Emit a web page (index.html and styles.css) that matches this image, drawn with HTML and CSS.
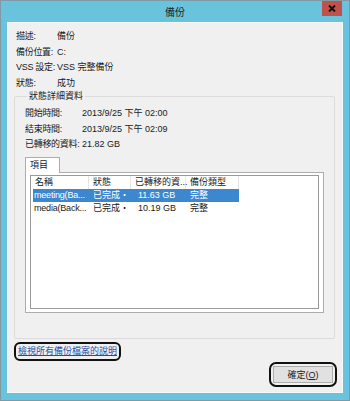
FILE: index.html
```html
<!DOCTYPE html>
<html lang="zh-Hant">
<head>
  <meta charset="UTF-8" />
  <title>備份</title>
  <link rel="stylesheet" href="styles.css">
</head>
<body>
  <div class="window">
    <div class="titlebar">
      <span></span>
      <span class="title">備份</span>
      <button class="close">
        <svg width="8" height="7" viewBox="0 0 8 7"><path d="M1 0.5 L7 6.5 M7 0.5 L1 6.5" stroke="#111" stroke-width="2"/></svg>
      </button>
    </div>
    <div class="content">
      <div class="info">
        <div class="row"><span class="label">描述:</span><span>備份</span></div>
        <div class="row"><span class="label">備份位置:</span><span>C:</span></div>
        <div class="row"><span class="label">VSS 設定:</span><span>VSS 完整備份</span></div>
        <div class="row"><span class="label">狀態:</span><span>成功</span></div>
      </div>
      <fieldset class="group">
        <legend>狀態詳細資料</legend>
        <div class="row"><span class="label wide">開始時間:</span><span>2013/9/25 下午 02:00</span></div>
        <div class="row"><span class="label wide">結束時間:</span><span>2013/9/25 下午 02:09</span></div>
        <div class="row"><span class="label wide">已轉移的資料:</span><span>21.82 GB</span></div>
        <div class="tabs">
          <div class="tab">項目</div>
        </div>
        <div class="panel">
          <div class="list">
            <div class="list-head">
              <span class="c1">名稱</span>
              <span class="c2">狀態</span>
              <span class="c3">已轉移的資...</span>
              <span class="c4">備份類型</span>
            </div>
            <div class="list-row selected">
              <span class="c1">meeting(Ba...</span>
              <span class="c2">已完成・</span>
              <span class="c3">11.63 GB</span>
              <span class="c4">完整</span>
            </div>
            <div class="list-row">
              <span class="c1">media(Back...</span>
              <span class="c2">已完成・</span>
              <span class="c3">10.19 GB</span>
              <span class="c4">完整</span>
            </div>
          </div>
        </div>
      </fieldset>
      <div class="linkline">
        <a href="#" class="help">檢視所有備份檔案的說明</a>
      </div>
      <div class="actions">
        <span class="ok-ring"><button class="ok">確定(<u>O</u>)</button></span>
      </div>
    </div>
  </div>
</body>
</html>
```

FILE: styles.css
```css
* { box-sizing: border-box; }
body {
  margin: 0;
  font-family: 'Liberation Sans', 'Noto Sans CJK TC', sans-serif;
  font-size: 9px;
  color: #1a1a1a;
}
.window {
  width: 350px;
  height: 401px;
  background: #69c3dc;
  border: 1px solid #7f9aa3;
  display: flex;
  flex-direction: column;
}
.titlebar {
  height: 21px;
  display: grid;
  grid-template-columns: 1fr auto 1fr;
  align-items: start;
}
.title {
  font-size: 10px;
  line-height: 23px;
  color: #222;
}
.close {
  justify-self: end;
  margin-right: 7px;
  width: 20px;
  height: 15px;
  border: none;
  padding: 0;
  background: #c2514c;
  display: flex;
  align-items: center;
  justify-content: center;
}
.content {
  flex: 1;
  margin: 0 6px 7px 6px;
  background: #f0f0f0;
  border: 1px solid #f8f8f8;
  padding: 6px 8px 0 8px;
  display: flex;
  flex-direction: column;
}
.row {
  display: flex;
  height: 15.5px;
  line-height: 15.5px;
  white-space: nowrap;
}
.label {
  width: 41px;
  flex-shrink: 0;
  letter-spacing: -0.3px;
}
.label.wide { width: 57px; }
.group {
  flex-shrink: 0;
  margin: 0 1px 0 -2px;
  padding: 5px 10px 0 10px;
  border: 1px solid #dcdcdc;
  border-radius: 2px;
  height: 248px;
}
.group legend {
  padding: 0 2px;
  margin-left: 2px;
  line-height: 10px;
}
.tabs {
  display: flex;
  margin-top: 4px;
}
.tab {
  width: 35px;
  height: 16px;
  line-height: 15px;
  padding-left: 4px;
  background: #fff;
  border: 1px solid #adadad;
  border-bottom: none;
  margin-bottom: -1px;
  position: relative;
}
.panel {
  width: 299px;
  height: 141px;
  background: #fff;
  border: 1px solid #adadad;
  padding: 2px 4px 3px 4px;
}
.list {
  height: 100%;
  border: 1px solid #9a9a9a;
  background: #fff;
}
.list-head, .list-row {
  display: flex;
  height: 13px;
  line-height: 13px;
  white-space: nowrap;
}
.list-head span {
  border-right: 1px solid #e5e5e5;
  padding-left: 4px;
}
.c1 { width: 58px; padding-left: 4px; }
.c2 { width: 42px; padding-left: 4px; }
.c3 { width: 55px; padding-left: 6px; }
.c4 { width: 53px; padding-left: 4px; }
.list-row span { padding-left: 4px; }
.list-row .c1 { width: 56px; padding-left: 1px; letter-spacing: -0.2px; }
.list-row .c3 { padding-left: 7px; }
.list-row {
  width: 206px;
  margin-left: 2px;
}
.list-row.selected {
  background: #3c87ce;
  color: #fff;
}
.linkline {
  margin-top: 3px;
  margin-left: -2px;
}
.help {
  display: inline-block;
  color: #1f4fa8;
  text-decoration: underline;
  font-size: 9px;
  padding: 2px 2px;
  border: 2px solid #111;
  border-radius: 6px;
  line-height: 11px;
}
.actions {
  display: flex;
  justify-content: flex-end;
  margin-top: 1px;
  margin-right: -3px;
}
.ok-ring {
  border: 2px solid #111;
  border-radius: 7px;
  padding: 2px;
}
.ok {
  width: 60px;
  height: 17px;
  font-family: inherit;
  font-size: 9px;
  background: #e1e1e1;
  border: 1px solid #adadad;
  color: #222;
  padding: 0;
}
```
